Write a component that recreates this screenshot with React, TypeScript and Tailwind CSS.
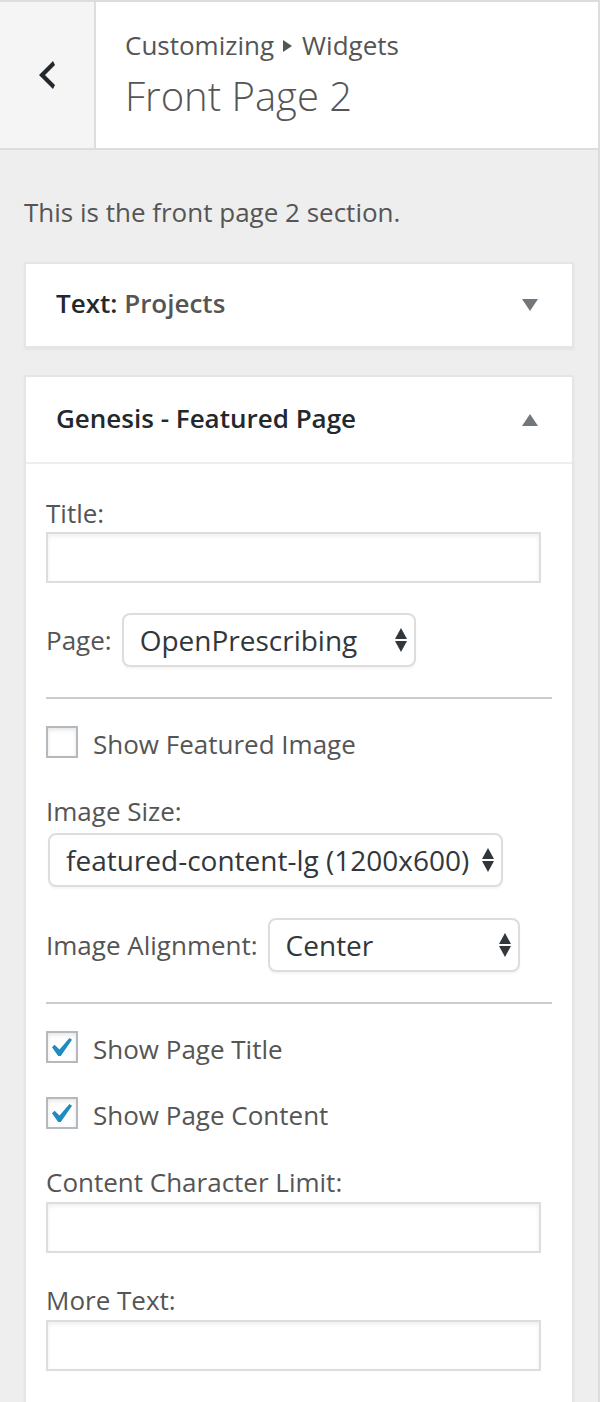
import React from "react";

function SelectArrows() {
  return (
    <svg width="12" height="24" viewBox="0 0 12 24" className="shrink-0">
      <polygon points="0,11 6,0 12,11" fill="#32373c" />
      <polygon points="0,13 12,13 6,24" fill="#32373c" />
    </svg>
  );
}

function FakeSelect({ value, width }: { value: string; width: string }) {
  return (
    <div
      className={`${width} h-[54px] flex items-center justify-between pl-[16px] pr-[7px] bg-white border-2 border-[#ddd] rounded-[8px] shadow-[0_2px_2px_rgba(0,0,0,0.04)] shrink-0`}
    >
      <span className="text-[28px] leading-[36px] text-[#32373c] whitespace-nowrap">{value}</span>
      <SelectArrows />
    </div>
  );
}

function TextInput() {
  return (
    <div className="w-[495px] h-[51px] bg-white border-2 border-[#ddd] shadow-[inset_0_2px_4px_rgba(0,0,0,0.07)]" />
  );
}

function Checkbox({ label, checked }: { label: string; checked?: boolean }) {
  return (
    <div className="flex items-center gap-[15px] h-[32px]">
      <div className="w-[32px] h-[32px] flex items-center justify-center bg-white border-2 border-[#b4b9be] shadow-[inset_0_2px_4px_rgba(0,0,0,0.1)]">
        {checked && (
          <svg width="22" height="20" viewBox="5.28 4.39 11.39 10.32">
            <path d="M14.83 4.89l1.34.94-5.81 8.38H9.02L5.78 9.67l1.34-1.25 2.57 2.4z" fill="#1e8cbe" />
          </svg>
        )}
      </div>
      <span className="text-[26px] leading-[36px] text-[#555] mt-[4px]">{label}</span>
    </div>
  );
}

function Label({ children }: { children: React.ReactNode }) {
  return <div className="text-[26px] leading-[36px] text-[#555]">{children}</div>;
}

function Triangle({ up }: { up?: boolean }) {
  return (
    <svg width="16" height="12" viewBox="0 0 16 12">
      {up ? (
        <polygon points="0,12 8,0 16,12" fill="#72777c" />
      ) : (
        <polygon points="0,0 16,0 8,12" fill="#72777c" />
      )}
    </svg>
  );
}

export default function App() {
  return (
    <div className="w-[600px] min-h-[1402px] overflow-hidden bg-[#eee] border-r-2 border-[#ddd] font-['Open_Sans',sans-serif]">
      {/* Header */}
      <div className="flex h-[150px] border-t-2 border-b-2 border-[#ddd]">
        <div className="w-[96px] shrink-0 bg-[#f5f5f5] border-r-2 border-[#ddd] flex items-center justify-center">
          <svg width="16" height="28" viewBox="6 3 8 14">
            <path d="M14 5l-5 5 5 5-1 2-7-7 7-7z" fill="#23282d" />
          </svg>
        </div>
        <div className="flex-1 bg-white pl-[29px] pt-[25px]">
          <div className="flex items-center text-[26px] leading-[36px] text-[#555]">
            <span>Customizing</span>
            <svg width="9" height="12" viewBox="0 0 9 12" className="ml-[9px] mr-[10px] mt-[1px]">
              <polygon points="0,0 9,6 0,12" fill="#555" />
            </svg>
            <span>Widgets</span>
          </div>
          <div className="mt-[9px] text-[40px] leading-[48px] font-light text-[#555]">Front Page 2</div>
        </div>
      </div>

      {/* Section body */}
      <div className="px-[24px] pt-[44px]">
        <p className="text-[26px] leading-[36px] text-[#555]">This is the front page 2 section.</p>

        {/* Collapsed widget */}
        <div className="mt-[32px] bg-white border-2 border-[#e5e5e5] shadow-[0_2px_2px_rgba(0,0,0,0.04)]">
          <div className="h-[82px] flex items-center justify-between pl-[30px] pr-[34px]">
            <div className="text-[26px] leading-[36px] font-semibold text-[#23282d] -mt-[4px]">
              Text: <span className="text-[#555]">Projects</span>
            </div>
            <Triangle />
          </div>
        </div>

        {/* Expanded widget */}
        <div className="mt-[27px] bg-white border-2 border-[#e5e5e5] shadow-[0_2px_2px_rgba(0,0,0,0.04)]">
          <div className="h-[87px] flex items-center justify-between pl-[30px] pr-[34px] border-b-2 border-[#eee]">
            <div className="text-[26px] leading-[36px] font-semibold text-[#23282d] -mt-[4px]">Genesis - Featured Page</div>
            <Triangle up />
          </div>

          <div className="px-[20px] pt-[31px] pb-[60px]">
            <Label>Title:</Label>
            <div className="mt-[1px]">
              <TextInput />
            </div>

            <div className="mt-[30px] flex items-center gap-[10px]">
              <Label>Page:</Label>
              <FakeSelect value="OpenPrescribing" width="w-[294px]" />
            </div>

            <div className="mt-[30px] h-[2px] bg-[#ccc]" />

            <div className="mt-[27px]">
              <Checkbox label="Show Featured Image" />
            </div>

            <div className="mt-[35px]">
              <Label>Image Size:</Label>
            </div>
            <div className="mt-[4px] ml-[2px]">
              <FakeSelect value="featured-content-lg (1200x600)" width="w-[455px]" />
            </div>

            <div className="mt-[31px] flex items-center gap-[10px]">
              <Label>Image Alignment:</Label>
              <FakeSelect value="Center" width="w-[252px]" />
            </div>

            <div className="mt-[30px] h-[2px] bg-[#ccc]" />

            <div className="mt-[27px]">
              <Checkbox label="Show Page Title" checked />
            </div>
            <div className="mt-[34px]">
              <Checkbox label="Show Page Content" checked />
            </div>

            <div className="mt-[35px]">
              <Label>Content Character Limit:</Label>
            </div>
            <div className="mt-[2px]">
              <TextInput />
            </div>

            <div className="mt-[29px]">
              <Label>More Text:</Label>
            </div>
            <div className="mt-[2px]">
              <TextInput />
            </div>
          </div>
        </div>
      </div>
    </div>
  );
}
